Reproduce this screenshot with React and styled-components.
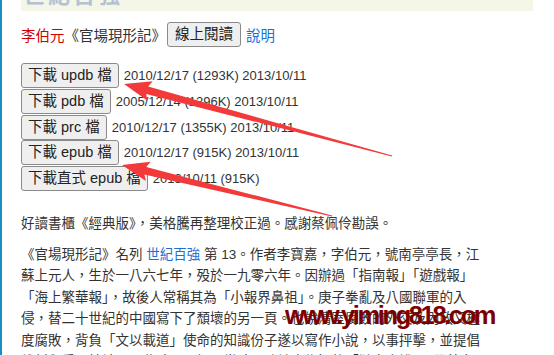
import React from "react";
import styled, { createGlobalStyle } from "styled-components";

const Global = createGlobalStyle`
  html, body { margin: 0; padding: 0; background: #fff; }
  body { font-family: "Liberation Sans", "Noto Sans CJK TC", sans-serif; color: #333; }
`;

const Page = styled.div`
  position: relative;
  width: 554px;
  height: 355px;
  overflow: hidden;
  box-sizing: border-box;
  border-left: 2px solid #1a8dc4;
  padding-left: 19px;
`;

const Banner = styled.div`
  width: 510px;
  height: 11px;
  background: #f4f6e8;
  overflow: hidden;
  display: flex;
  align-items: flex-end;
  padding-left: 2px;
`;

const BannerTitle = styled.div`
  font-size: 22px;
  font-weight: bold;
  line-height: 22px;
  margin-bottom: 4px;
  color: #b3c2d3;
  letter-spacing: 3px;
  white-space: nowrap;
`;

const TopRow = styled.div`
  display: flex;
  align-items: center;
  gap: 4px;
  margin-top: 11px;
  height: 25px;
  font-size: 14.5px;
`;

const Author = styled.span`
  color: #d40000;
`;

const Title = styled.span`
  color: #333;
  margin-left: -4px;
  margin-right: -3px;
`;

const Btn = styled.button`
  font-family: inherit;
  font-size: 14.5px;
  color: #222;
  height: 25px;
  padding: 0 ${(p) => (p.$wide ? 7 : 6)}px;
  background: #efefef;
  border: 1px solid #8a8a8a;
  border-radius: 3px;
  line-height: 23px;
  white-space: nowrap;
`;

const Link = styled.a`
  color: #1c6fd6;
  text-decoration: none;
  margin-left: ${(p) => p.$shift || 0}px;
`;

const Downloads = styled.div`
  display: flex;
  flex-direction: column;
  gap: 0.75px;
  margin-top: 16px;
`;

const DlRow = styled.div`
  display: flex;
  align-items: center;
  gap: 5px;
`;

const DlInfo = styled.span`
  font-size: 13px;
  color: #333;
  white-space: nowrap;
`;

const Para = styled.p`
  margin: ${(p) => p.$top}px 0 0;
  font-size: 13.5px;
  line-height: 21.5px;
  color: #333;
  white-space: nowrap;
`;

const Overlay = styled.svg`
  position: absolute;
  left: 0;
  top: 0;
  pointer-events: none;
`;

const Watermark = styled.div`
  position: absolute;
  left: 283px;
  top: 300px;
  font-family: "Liberation Sans", sans-serif;
  font-weight: bold;
  font-size: 25.5px;
  line-height: 30px;
  letter-spacing: -2.4px;
  color: #7d0000;
  white-space: nowrap;
`;

function arrowPoints(tx, ty, px, py) {
  const dx = px - tx;
  const dy = py - ty;
  const len = Math.hypot(dx, dy);
  const ux = dx / len;
  const uy = dy / len;
  const nx = -uy;
  const ny = ux;
  const headLen = 24;
  const bx = px - ux * headLen;
  const by = py - uy * headLen;
  const sw = 3.8;
  const hw = 10;
  const tw = 0.5;
  const pts = [
    [tx + nx * tw, ty + ny * tw],
    [bx + nx * sw, by + ny * sw],
    [bx + nx * hw - ux * 3, by + ny * hw - uy * 3],
    [px, py],
    [bx - nx * hw - ux * 3, by - ny * hw - uy * 3],
    [bx - nx * sw, by - ny * sw],
    [tx - nx * tw, ty - ny * tw],
  ];
  return pts.map((p) => p.map((v) => v.toFixed(1)).join(",")).join(" ");
}

const downloads = [
  ["下載 updb 檔", "2010/12/17 (1293K) 2013/10/11"],
  ["下載 pdb 檔", "2005/12/14 (1296K) 2013/10/11"],
  ["下載 prc 檔", "2010/12/17 (1355K) 2013/10/11"],
  ["下載 epub 檔", "2010/12/17 (915K) 2013/10/11"],
  ["下載直式 epub 檔", "2013/10/11 (915K)"],
];

export default function App() {
  return (
    <>
      <Global />
      <Page>
        <Banner>
          <BannerTitle>世紀百強</BannerTitle>
        </Banner>
        <TopRow>
          <Author>李伯元</Author>
          <Title>《官場現形記》</Title>
          <Btn $wide>線上閱讀</Btn>
          <Link href="#" $shift={1}>說明</Link>
        </TopRow>
        <Downloads>
          {downloads.map(([label, info]) => (
            <DlRow key={label}>
              <Btn>{label}</Btn>
              <DlInfo>{info}</DlInfo>
            </DlRow>
          ))}
        </Downloads>
        <Para $top={22}>好讀書櫃《經典版》，美格騰再整理校正過。感謝蔡佩伶勘誤。</Para>
        <Para $top={9}>
          《官場現形記》名列 <Link href="#">世紀百強</Link> 第 13。作者李寶嘉，字伯元，號南亭亭長，江
          <br />
          蘇上元人，生於一八六七年，殁於一九零六年。因辦過「指南報」「遊戲報」
          <br />
          「海上繁華報」，故後人常稱其為「小報界鼻祖」。庚子拳亂及八國聯軍的入
          <br />
          侵，替二十世紀的中國寫下了頹壞的另一頁。也說清室腐敗的外交及內政又極
          <br />
          度腐敗，背負「文以載道」使命的知識份子遂以寫作小說，以事抨擊，並提倡
          <br />
          維新與愛國精神，而此時，以揭露當時黑暗社會為旨的「譴責小說」，帶著文
        </Para>
        <Watermark>www.yiming818.com</Watermark>
        <Overlay width="554" height="355" viewBox="0 0 554 355">
          <polygon points={arrowPoints(390, 156, 122, 84)} fill="#f33a3a" />
          <polygon points={arrowPoints(330, 216, 120, 165)} fill="#f33a3a" />
        </Overlay>
      </Page>
    </>
  );
}
